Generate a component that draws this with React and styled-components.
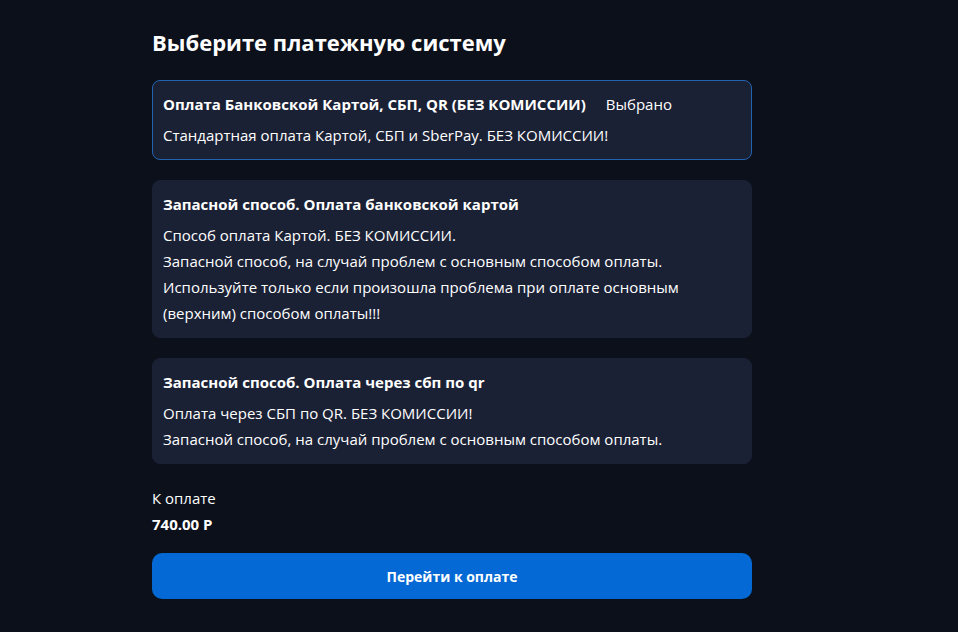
import styled, { createGlobalStyle } from "styled-components";

const GlobalStyle = createGlobalStyle`
  html, body {
    margin: 0;
    padding: 0;
    background-color: #0c101b;
  }
  body {
    font-family: "Open Sans", "Noto Sans", sans-serif;
    color: #ffffff;
  }
`;

const Page = styled.div`
  min-height: 632px;
  padding: 26px 0 0 152px;
  box-sizing: border-box;
`;

const Main = styled.main`
  width: 600px;
  display: flex;
  flex-direction: column;
`;

const Heading = styled.h1`
  font-size: 22px;
  font-weight: 700;
  line-height: 32px;
  margin: 0 0 22px;
`;

const Methods = styled.ul`
  list-style: none;
  margin: 0;
  padding: 0;
  display: flex;
  flex-direction: column;
  gap: 20px;
`;

const Card = styled.li`
  background-color: #1b2135;
  border: 1px solid ${(props) => (props.$selected ? "#2463ad" : "#1b2135")};
  border-radius: 8px;
  padding: 11px 10px;
  display: flex;
  flex-direction: column;
  gap: 6px;
  cursor: pointer;
`;

const TitleRow = styled.div`
  display: flex;
  align-items: center;
  gap: 20px;
`;

const Title = styled.h4`
  font-size: 15px;
  font-weight: 700;
  line-height: 24px;
  margin: 0;
`;

const Badge = styled.span`
  font-size: 15px;
  line-height: 24px;
`;

const Description = styled.div`
  font-size: 15px;
  line-height: 26px;
`;

const Total = styled.div`
  margin-top: 21px;
  display: flex;
  flex-direction: column;
  font-size: 15px;
  line-height: 26px;
`;

const Amount = styled.strong`
  font-weight: 700;
`;

const PayButton = styled.button`
  margin-top: 16px;
  height: 46px;
  width: 100%;
  border: none;
  border-radius: 10px;
  background-color: #0469d4;
  color: #ffffff;
  font-family: "Open Sans", "Noto Sans", sans-serif;
  font-size: 14px;
  font-weight: 700;
  cursor: pointer;
`;

const methods = [
  {
    id: "main",
    title: "Оплата Банковской Картой, СБП, QR (БЕЗ КОМИССИИ)",
    lines: ["Стандартная оплата Картой, СБП и SberPay. БЕЗ КОМИССИИ!"],
  },
  {
    id: "card",
    title: "Запасной способ. Оплата банковской картой",
    lines: [
      "Способ оплата Картой. БЕЗ КОМИССИИ.",
      "Запасной способ, на случай проблем с основным способом оплаты.",
      "Используйте только если произошла проблема при оплате основным",
      "(верхним) способом оплаты!!!",
    ],
  },
  {
    id: "qr",
    title: "Запасной способ. Оплата через сбп по qr",
    lines: [
      "Оплата через СБП по QR. БЕЗ КОМИССИИ!",
      "Запасной способ, на случай проблем с основным способом оплаты.",
    ],
  },
];

const App = () => {
  const selected = "main";
  return (
    <>
      <GlobalStyle />
      <Page>
        <Main>
          <Heading>Выберите платежную систему</Heading>
          <Methods>
            {methods.map((m) => (
              <Card key={m.id} $selected={m.id === selected}>
                <TitleRow>
                  <Title>{m.title}</Title>
                  {m.id === selected && <Badge>Выбрано</Badge>}
                </TitleRow>
                <Description>
                  {m.lines.map((line) => (
                    <div key={line}>{line}</div>
                  ))}
                </Description>
              </Card>
            ))}
          </Methods>
          <Total>
            <span>К оплате</span>
            <Amount>740.00 Р</Amount>
          </Total>
          <PayButton>Перейти к оплате</PayButton>
        </Main>
      </Page>
    </>
  );
};

export default App;
